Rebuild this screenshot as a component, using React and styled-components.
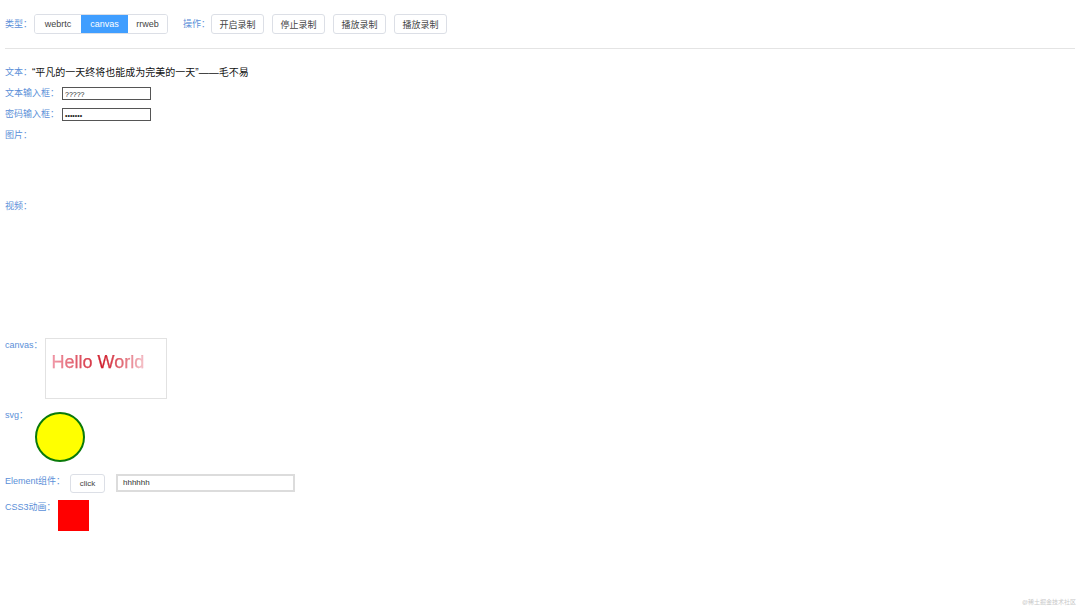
import React from 'react';
import styled, { createGlobalStyle } from 'styled-components';

const GlobalStyle = createGlobalStyle`
html, body {
  margin: 0;
  padding: 0;
  background: #fff;
}
body {
  font-family: "Liberation Sans", "Noto Sans CJK SC", sans-serif;
}
`;

const Page = styled.div`
position: relative;
min-height: 608px;
box-sizing: border-box;
padding: 14px 5px 0 5px;
font-size: 9px;
color: #000;
`;

const Toolbar = styled.div`
display: flex;
align-items: center;
height: 20px;
`;

const Label = styled.span`
color: #5b8fd8;
font-size: 9px;
line-height: ${p => p.lh || 21}px;
white-space: nowrap;
flex-shrink: 0;
width: ${p => (p.w ? p.w + 'px' : 'auto')};
margin-left: ${p => p.ml || 0}px;
`;

const Group = styled.div`
display: flex;
height: 20px;
border: 1px solid #dcdfe6;
border-radius: 3px;
box-sizing: border-box;
overflow: hidden;
`;

const Seg = styled.div`
display: flex;
align-items: center;
justify-content: center;
width: ${p => p.w}px;
font-size: 9px;
color: ${p => (p.active ? '#fff' : '#444')};
background: ${p => (p.active ? '#409eff' : '#fff')};
`;

const Btn = styled.div`
display: flex;
align-items: center;
justify-content: center;
box-sizing: border-box;
width: ${p => p.w || 53}px;
height: ${p => p.h || 20}px;
margin-left: ${p => p.ml || 0}px;
border: 1px solid #dcdfe6;
border-radius: 3px;
font-size: ${p => p.fs || 9}px;
color: #444;
background: #fff;
`;

const Divider = styled.div`
height: 1px;
background: #e4e4e4;
margin-top: 14px;
margin-bottom: 13px;
`;

const Row = styled.div`
display: flex;
align-items: ${p => p.align || 'center'};
margin-top: ${p => p.mt || 0}px;
`;

const Quote = styled.span`
font-size: 10px;
line-height: 21px;
color: #111;
`;

const TextInput = styled.div`
box-sizing: border-box;
width: 89px;
height: 13px;
margin-left: 3px;
border: 1px solid #555;
font-size: 7px;
line-height: 13px;
padding-left: 2px;
color: #222;
overflow: hidden;
`;

const Blank = styled.div`
height: ${p => p.h}px;
`;

const CanvasBox = styled.div`
box-sizing: border-box;
width: 122px;
height: 61px;
margin-left: ${p => p.ml}px;
border: 1px solid #e2e2e2;
padding: 12px 0 0 6px;
`;

const Gradient = styled.span`
font-size: 18px;
line-height: 22px;
background: linear-gradient(90deg, #f29aa9 0%, #d01c2b 55%, #f6c4cb 100%);
-webkit-background-clip: text;
background-clip: text;
color: transparent;
-webkit-text-stroke: 0.25px rgba(208, 28, 43, 0.25);
`;

const ElInput = styled.div`
box-sizing: border-box;
width: 179px;
height: 18px;
margin-left: 11px;
border: 2px solid #dcdcdc;
font-size: 8px;
line-height: 14px;
padding-left: 5px;
color: #333;
`;

const Square = styled.div`
width: 31px;
height: 31px;
margin-left: 3px;
background: #ff0000;
`;

const Watermark = styled.div`
position: absolute;
right: 4px;
bottom: 2px;
font-size: 6px;
color: #c8c8c8;
`;

export default function App() {
  return (
    <>
      <GlobalStyle />
      <Page>
        <Toolbar>
          <Label w={29} lh={20}>类型：</Label>
          <Group>
            <Seg w={46}>webrtc</Seg>
            <Seg w={47} active>canvas</Seg>
            <Seg w={39}>rrweb</Seg>
          </Group>
          <Label w={28} ml={15} lh={20}>操作：</Label>
          <Btn>开启录制</Btn>
          <Btn ml={8}>停止录制</Btn>
          <Btn ml={8}>播放录制</Btn>
          <Btn ml={8}>播放录制</Btn>
        </Toolbar>
        <Divider />

        <Row>
          <Label>文本：</Label>
          <Quote>“平凡的一天终将也能成为完美的一天”——毛不易</Quote>
        </Row>
        <Row>
          <Label>文本输入框：</Label>
          <TextInput>?????</TextInput>
        </Row>
        <Row>
          <Label>密码输入框：</Label>
          <TextInput>•••••••</TextInput>
        </Row>
        <Row align="flex-start">
          <Label>图片：</Label>
          <Blank h={71} />
        </Row>
        <Row align="flex-start">
          <Label>视频：</Label>
          <Blank h={142} />
        </Row>

        <Row align="flex-start">
          <Label lh={14}>canvas：</Label>
          <CanvasBox ml={2}>
            <Gradient>Hello World</Gradient>
          </CanvasBox>
        </Row>

        <Row align="flex-start" mt={9}>
          <Label lh={14} w={28}>svg：</Label>
          <svg width="56" height="56" viewBox="0 0 56 56">
            <circle cx="27" cy="29" r="24" fill="#ffff00" stroke="#0a7a0a" strokeWidth="2" />
          </svg>
        </Row>

        <Row align="flex-start" mt={10}>
          <Label lh={14} w={65}>Element组件：</Label>
          <Btn w={35} h={19} fs={8}>click</Btn>
          <ElInput>hhhhhh</ElInput>
        </Row>

        <Row align="flex-start" mt={7}>
          <Label lh={14} w={50}>CSS3动画：</Label>
          <Square />
        </Row>

        <Watermark>@稀土掘金技术社区</Watermark>
      </Page>
    </>
  );
}
